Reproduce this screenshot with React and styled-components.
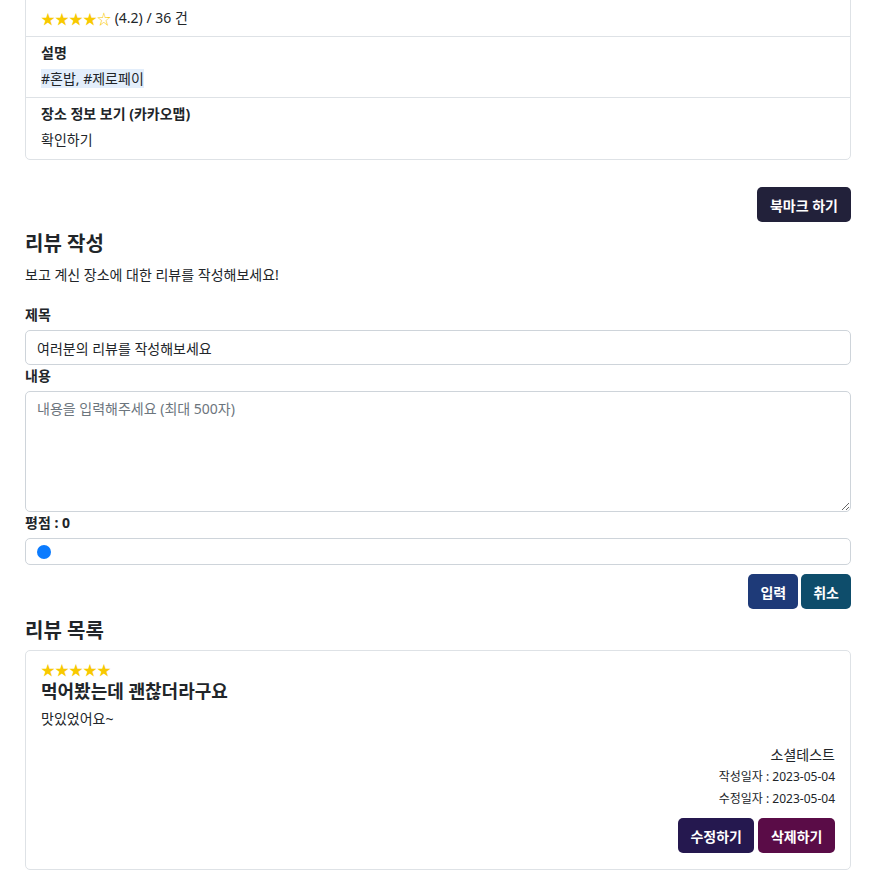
import styled, { createGlobalStyle } from "styled-components";

const GlobalStyle = createGlobalStyle`
  body {
    margin: 0;
    background: #fff;
    color: #212529;
    font-family: "Noto Sans", "Noto Sans CJK KR", sans-serif;
    font-size: 14px;
  }
`;

function App() {
  return (
    <Page>
      <GlobalStyle />
      <InfoCard>
        <InfoRow>
          <InfoLabel>평점</InfoLabel>
          <InfoValue>
            <Stars>★★★★☆</Stars> (4.2) / 36 건
          </InfoValue>
        </InfoRow>
        <InfoRow>
          <InfoLabel>설명</InfoLabel>
          <InfoValue>
            <Tag>#혼밥, #제로페이</Tag>
          </InfoValue>
        </InfoRow>
        <InfoRow>
          <InfoLabel>장소 정보 보기 (카카오맵)</InfoLabel>
          <InfoValue>확인하기</InfoValue>
        </InfoRow>
      </InfoCard>

      <ButtonRow $top={27}>
        <Button $bg="#22213a" $pad={13}>북마크 하기</Button>
      </ButtonRow>

      <Heading $top={8}>리뷰 작성</Heading>
      <Lead>보고 계신 장소에 대한 리뷰를 작성해보세요!</Lead>

      <FieldLabel $top={20}>제목</FieldLabel>
      <TextInput defaultValue="여러분의 리뷰를 작성해보세요" />
      <FieldLabel $top={1}>내용</FieldLabel>
      <TextArea placeholder="내용을 입력해주세요 (최대 500자)" />
      <FieldLabel $top={1}>평점 : 0</FieldLabel>
      <RangeBox>
        <Range type="range" min="0" max="5" defaultValue="0" />
      </RangeBox>

      <ButtonRow $top={9}>
        <Button $bg="#1e3a78">입력</Button>
        <Button $bg="#0e4d6b">취소</Button>
      </ButtonRow>

      <Heading $top={8}>리뷰 목록</Heading>
      <ReviewCard>
        <Stars>★★★★★</Stars>
        <ReviewTitle>먹어봤는데 괜찮더라구요</ReviewTitle>
        <ReviewBody>맛있었어요~</ReviewBody>
        <Meta>
          <Author>소셜테스트</Author>
          <DateLine>작성일자 : 2023-05-04</DateLine>
          <DateLine>수정일자 : 2023-05-04</DateLine>
          <ButtonRow $top={9} $gap={4}>
            <Button $bg="#25184f" $pad={12.5}>수정하기</Button>
            <Button $bg="#5a0c47" $pad={12.5}>삭제하기</Button>
          </ButtonRow>
        </Meta>
      </ReviewCard>
    </Page>
  );
}

export default App;

const Page = styled.div`
  margin-top: -25px;
  padding: 0 27px 20px 25px;
  display: flex;
  flex-direction: column;
`;

const InfoCard = styled.div`
  border: 1px solid #dee2e6;
  border-radius: 5px;
  display: flex;
  flex-direction: column;
`;

const InfoRow = styled.div`
  padding: 6px 15px 8px;
  display: flex;
  flex-direction: column;
  gap: 6px;
  & + & {
    border-top: 1px solid #dee2e6;
  }
  &:last-child {
    padding-bottom: 9px;
  }
`;

const InfoLabel = styled.div`
  font-weight: 700;
  line-height: 20px;
`;

const InfoValue = styled.div`
  height: 20px;
  line-height: 20px;
`;

const Tag = styled.span`
  background: #e3eefb;
`;

const Stars = styled.span`
  display: inline-block;
  height: 20px;
  vertical-align: top;
  color: #f8c900;
  line-height: 20px;
  font-family: "Noto Sans CJK KR", sans-serif;
  font-size: 14px;
`;

const ButtonRow = styled.div`
  margin-top: ${(p) => p.$top}px;
  display: flex;
  justify-content: flex-end;
  gap: ${(p) => p.$gap || 3}px;
`;

const Button = styled.button`
  height: 35px;
  padding: 0 ${(p) => p.$pad || 12}px;
  border: none;
  border-radius: 5px;
  background: ${(p) => p.$bg};
  color: #fff;
  font-family: inherit;
  font-size: 14px;
  font-weight: 700;
  cursor: pointer;
`;

const Heading = styled.h2`
  margin: ${(p) => p.$top}px 0 0;
  font-size: 20px;
  font-weight: 700;
  line-height: 28px;
`;

const Lead = styled.p`
  margin: 7px 0 0;
  line-height: 20px;
`;

const FieldLabel = styled.label`
  margin-top: ${(p) => p.$top}px;
  font-weight: 700;
  line-height: 20px;
`;

const fieldBase = `
  box-sizing: border-box;
  width: 100%;
  border: 1px solid #ced4da;
  border-radius: 5px;
  font-family: inherit;
  font-size: 14px;
  color: #212529;
  background: #fff;
`;

const TextInput = styled.input`
  ${fieldBase}
  margin-top: 5px;
  height: 35px;
  padding: 0 11px;
`;

const TextArea = styled.textarea`
  ${fieldBase}
  margin-top: 5px;
  height: 121px;
  padding: 6px 11px;
  line-height: 21px;
  resize: vertical;
  &::placeholder {
    color: #6c757d;
  }
`;

const RangeBox = styled.div`
  box-sizing: border-box;
  margin-top: 5px;
  height: 27px;
  border: 1px solid #ced4da;
  border-radius: 5px;
  display: flex;
  align-items: center;
  padding: 0 11px;
`;

const Range = styled.input`
  -webkit-appearance: none;
  appearance: none;
  width: 100%;
  margin: 0;
  background: transparent;
  &::-webkit-slider-runnable-track {
    height: 14px;
    background: transparent;
  }
  &::-webkit-slider-thumb {
    -webkit-appearance: none;
    width: 14px;
    height: 14px;
    border-radius: 50%;
    background: #0b7bfe;
    border: none;
  }
`;

const ReviewCard = styled.div`
  margin-top: 5px;
  border: 1px solid #dee2e6;
  border-radius: 5px;
  padding: 8px 15px 16px;
  display: flex;
  flex-direction: column;
`;

const ReviewTitle = styled.h3`
  margin: 0;
  font-size: 18px;
  font-weight: 700;
  line-height: 24px;
`;

const ReviewBody = styled.p`
  margin: 6px 0 0;
  line-height: 20px;
`;

const Meta = styled.div`
  margin-top: 16px;
  display: flex;
  flex-direction: column;
  align-items: flex-end;
`;

const Author = styled.div`
  line-height: 20px;
`;

const DateLine = styled.div`
  margin-top: 2px;
  font-size: 12px;
  line-height: 20px;
`;
